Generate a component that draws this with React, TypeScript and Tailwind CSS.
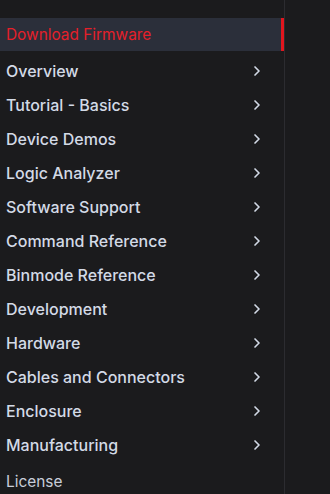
import { ChevronRight } from "lucide-react";

const items = [
  "Overview",
  "Tutorial - Basics",
  "Device Demos",
  "Logic Analyzer",
  "Software Support",
  "Command Reference",
  "Binmode Reference",
  "Development",
  "Hardware",
  "Cables and Connectors",
  "Enclosure",
  "Manufacturing",
];

export default function App() {
  return (
    <div
      className="flex h-[494px] w-[330px] overflow-hidden bg-[#1b1b1d]"
      style={{ fontFamily: "Inter, 'Noto Sans', sans-serif" }}
    >
      <nav className="w-[285px] shrink-0 border-r border-[#2c2c30] pt-[18px]">
        <div className="flex h-[33px] items-center border-r-[3px] border-[#e1161e] bg-[#2b2f3a] pl-[6px] pt-px text-[15.4px] text-[#e5202a]">
          Download Firmware
        </div>
        <ul className="mt-[3px]">
          {items.map((label) => (
            <li
              key={label}
              className="flex h-[34px] items-center justify-between pl-[6px] pr-[19px] text-[16px] font-medium text-[#d3dae6]"
            >
              <span>{label}</span>
              <ChevronRight className="size-[16px] text-[#d3dae6]" strokeWidth={2.5} />
            </li>
          ))}
          <li className="mt-[3px] flex h-[34px] items-center pl-[6px] text-[15.4px] text-[#c8ceda]">License</li>
        </ul>
      </nav>
      <div className="flex-1" />
    </div>
  );
}
